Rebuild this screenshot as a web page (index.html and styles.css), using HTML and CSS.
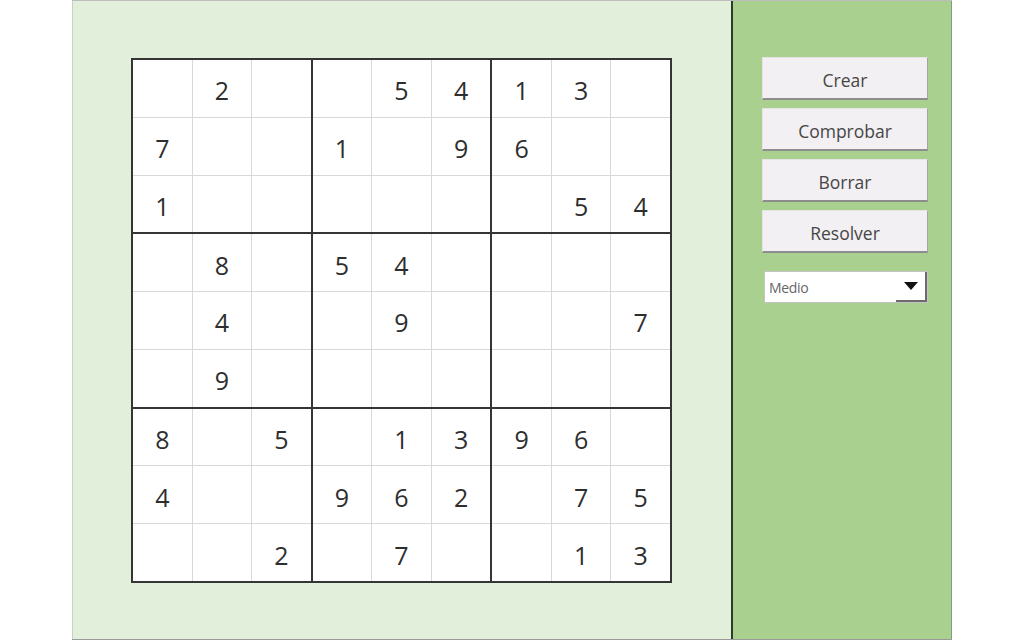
FILE: index.html
```html
<!DOCTYPE html>
<html lang="es">
<head>
<meta charset="utf-8">
<title>Sudoku</title>
<link rel="stylesheet" href="styles.css">
</head>
<body>
<div class="app">
  <div class="board-panel">
    <div class="sudoku">
      <div class="block">
        <div class="cell"></div><div class="cell">2</div><div class="cell"></div>
        <div class="cell">7</div><div class="cell"></div><div class="cell"></div>
        <div class="cell">1</div><div class="cell"></div><div class="cell"></div>
      </div>
      <div class="block">
        <div class="cell"></div><div class="cell">5</div><div class="cell">4</div>
        <div class="cell">1</div><div class="cell"></div><div class="cell">9</div>
        <div class="cell"></div><div class="cell"></div><div class="cell"></div>
      </div>
      <div class="block">
        <div class="cell">1</div><div class="cell">3</div><div class="cell"></div>
        <div class="cell">6</div><div class="cell"></div><div class="cell"></div>
        <div class="cell"></div><div class="cell">5</div><div class="cell">4</div>
      </div>
      <div class="block">
        <div class="cell"></div><div class="cell">8</div><div class="cell"></div>
        <div class="cell"></div><div class="cell">4</div><div class="cell"></div>
        <div class="cell"></div><div class="cell">9</div><div class="cell"></div>
      </div>
      <div class="block">
        <div class="cell">5</div><div class="cell">4</div><div class="cell"></div>
        <div class="cell"></div><div class="cell">9</div><div class="cell"></div>
        <div class="cell"></div><div class="cell"></div><div class="cell"></div>
      </div>
      <div class="block">
        <div class="cell"></div><div class="cell"></div><div class="cell"></div>
        <div class="cell"></div><div class="cell"></div><div class="cell">7</div>
        <div class="cell"></div><div class="cell"></div><div class="cell"></div>
      </div>
      <div class="block">
        <div class="cell">8</div><div class="cell"></div><div class="cell">5</div>
        <div class="cell">4</div><div class="cell"></div><div class="cell"></div>
        <div class="cell"></div><div class="cell"></div><div class="cell">2</div>
      </div>
      <div class="block">
        <div class="cell"></div><div class="cell">1</div><div class="cell">3</div>
        <div class="cell">9</div><div class="cell">6</div><div class="cell">2</div>
        <div class="cell"></div><div class="cell">7</div><div class="cell"></div>
      </div>
      <div class="block">
        <div class="cell">9</div><div class="cell">6</div><div class="cell"></div>
        <div class="cell"></div><div class="cell">7</div><div class="cell">5</div>
        <div class="cell"></div><div class="cell">1</div><div class="cell">3</div>
      </div>
    </div>
  </div>
  <div class="side-panel">
    <button class="btn">Crear</button>
    <button class="btn">Comprobar</button>
    <button class="btn">Borrar</button>
    <button class="btn">Resolver</button>
    <div class="select">
      <span class="select-text">Medio</span>
      <span class="select-arrow"><span class="tri"></span></span>
    </div>
  </div>
</div>
</body>
</html>
```
FILE: styles.css
```css
html, body {
  margin: 0;
  padding: 0;
  background: #ffffff;
}
body {
  width: 1024px;
  height: 640px;
  overflow: hidden;
  font-family: "Open Sans", "Noto Sans", sans-serif;
}
.app {
  display: flex;
  margin-left: 72px;
  width: 880px;
  height: 640px;
  box-sizing: border-box;
  border-top: 1px solid #bdbdbd;
  border-bottom: 1px solid #9a9a9a;
}
.board-panel {
  width: 659px;
  box-sizing: border-box;
  background: #e2efda;
  border-left: 1px solid #c8d2c4;
  padding: 57px 0 0 58px;
}
.sudoku {
  width: 541px;
  height: 525px;
  box-sizing: border-box;
  border: 2px solid #353535;
  background: #353535;
  display: grid;
  grid-template-columns: repeat(3, 1fr);
  grid-template-rows: repeat(3, 1fr);
  gap: 2px;
}
.block {
  display: grid;
  grid-template-columns: repeat(3, 1fr);
  grid-template-rows: repeat(3, 1fr);
  gap: 1px;
  background: #d8d8d8;
}
.cell {
  background: #ffffff;
  display: flex;
  justify-content: center;
  align-items: center;
  padding-top: 5px;
  box-sizing: border-box;
  font-size: 25px;
  font-weight: 500;
  color: #2e2e2e;
  line-height: 1;
}
.side-panel {
  flex: 1;
  background: #a9d08e;
  border-left: 2px solid #2f3a2a;
  border-right: 1px solid #8a9a80;
  display: flex;
  flex-direction: column;
  align-items: flex-start;
  padding: 56px 0 0 29px;
  gap: 8px;
}
.btn {
  width: 166px;
  height: 43px;
  margin: 0;
  padding: 3px 0 0 0;
  background: #f2f0f3;
  border: none;
  border-top: 1px solid #e4e4e4;
  border-left: 1px solid #e4e4e4;
  border-right: 1px solid #a4a4a4;
  border-bottom: 2px solid #8d8d8d;
  font-family: "Open Sans", "Noto Sans", sans-serif;
  font-size: 17.5px;
  font-weight: 500;
  color: #464646;
  cursor: pointer;
}
.select {
  margin: 10px 0 0 2px;
  width: 164px;
  height: 32px;
  box-sizing: border-box;
  background: #ffffff;
  border: 1px solid #c4c4c4;
  display: flex;
  align-items: center;
}
.select-text {
  flex: 1;
  padding-left: 4px;
  font-size: 14px;
  color: #666666;
  font-family: "Open Sans", "Noto Sans", sans-serif;
  letter-spacing: -0.3px;
}
.select-arrow {
  width: 31px;
  height: 100%;
  box-sizing: border-box;
  border-right: 2px solid #6b6b6b;
  border-bottom: 2px solid #6b6b6b;
  display: flex;
  justify-content: center;
  align-items: center;
}
.tri {
  width: 0;
  height: 0;
  border-left: 7px solid transparent;
  border-right: 7px solid transparent;
  border-top: 8px solid #111111;
}
```
